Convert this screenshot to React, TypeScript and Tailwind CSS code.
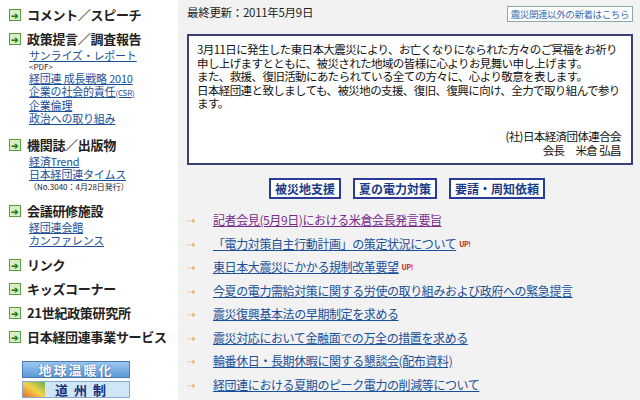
const F = { fontFamily: '"Noto Sans CJK JP", "Liberation Sans", sans-serif' };

function Head({ t }: { t: string }) {
  return (
    <div className="flex items-center gap-[6px] font-bold text-[13px] text-[#222] leading-[16px] tracking-[-0.3px]">
      <span className="w-[12px] h-[12px] bg-[#d8f0c8] border border-[#5a9a3a] flex items-center justify-center text-[#2a7a1a] text-[9px] leading-none">➔</span>
      {t}
    </div>
  );
}

function L({ children }: { children: React.ReactNode }) {
  return <div className="text-[11px] leading-[13px] text-[#1a4f9a] underline tracking-[-0.2px]">{children}</div>;
}

const news = [
  ["記者会見(5月9日)における米倉会長発言要旨", false, true],
  ["「電力対策自主行動計画」の策定状況について", true, false],
  ["東日本大震災にかかる規制改革要望", true, false],
  ["今夏の電力需給対策に関する労使の取り組みおよび政府への緊急提言", false, false],
  ["震災復興基本法の早期制定を求める", false, false],
  ["震災対応において金融面での万全の措置を求める", false, false],
  ["輪番休日・長期休暇に関する懇談会(配布資料)", false, false],
  ["経団連における夏期のピーク電力の削減等について", false, false],
  ["本年夏の電力需給対策に関する懇談会(配布資料)", false, false],
] as const;

export default function App() {
  return (
    <div className="w-[640px] h-[400px] overflow-hidden flex bg-white" style={F}>
      <aside className="w-[178px] shrink-0 pl-[9px] pt-[7px] flex flex-col">
        <Head t="コメント／スピーチ" />
        <div className="mt-[8px]"><Head t="政策提言／調査報告" /></div>
        <div className="pl-[20px] mt-[2px]">
          <L>サンライズ・レポート</L>
          <div className="text-[8px] leading-[10px] text-[#222]">&lt;PDF&gt;</div>
          <L>経団連 成長戦略 2010</L>
          <L>企業の社会的責任<span className="text-[8px]">(CSR)</span></L>
          <L>企業倫理</L>
          <L>政治への取り組み</L>
        </div>
        <div className="mt-[12px]"><Head t="機関誌／出版物" /></div>
        <div className="pl-[20px] mt-[2px]">
          <L>経済Trend</L>
          <L>日本経団連タイムス</L>
          <div className="text-[8px] leading-[12px] text-[#222]">（No.3040：4月28日発行）</div>
        </div>
        <div className="mt-[10px]"><Head t="会議研修施設" /></div>
        <div className="pl-[20px] mt-[2px]">
          <L>経団連会館</L>
          <L>カンファレンス</L>
        </div>
        <div className="mt-[10px] flex flex-col gap-[8px]">
          <Head t="リンク" />
          <Head t="キッズコーナー" />
          <Head t="21世紀政策研究所" />
          <Head t="日本経団連事業サービス" />
        </div>
        <div className="ml-[13px] mt-[16px] flex flex-col gap-[3px]">
          <div className="w-[108px] h-[17px] bg-gradient-to-b from-[#9cc8f0] to-[#5d9ad8] border border-[#4a7ab0] text-white font-bold text-[13px] leading-[15px] text-center tracking-[2px]" style={{ textShadow: "0 0 2px #1a4f9a" }}>地球温暖化</div>
          <div className="w-[108px] h-[17px] bg-[#cfe6f7] border border-[#88aad0] text-[#1a2f7a] font-bold text-[13px] leading-[15px] flex items-center gap-[10px]">
            <span className="w-[22px] h-full bg-gradient-to-tr from-[#e06a2a] via-[#f2d34a] to-[#6ab04a]" />
            <span className="tracking-[6px]">道州制</span>
          </div>
        </div>
      </aside>
      <main className="flex-1 bg-[#f2f2f2] pl-[9px] pr-[7px] pt-[4px]">
        <div className="flex justify-between items-center">
          <span className="text-[11.5px] text-[#222] tracking-[-0.3px]">最終更新：2011年5月9日</span>
          <span className="text-[9.5px] text-[#3a6ab0] bg-white border border-[#8aa] px-[3px] leading-[14px] mt-[2px] tracking-[-0.4px]">震災関連以外の新着はこちら</span>
        </div>
        <div className="mt-[12px] bg-white border-2 border-[#3a3f7a] h-[131px] pl-[8px] pr-[6px] pt-[7px] text-[11.5px] leading-[13.5px] text-[#111] tracking-[-0.6px]">
          <p>3月11日に発生した東日本大震災により、お亡くなりになられた方々のご冥福をお祈り申し上げますとともに、被災された地域の皆様に心よりお見舞い申し上げます。<br />また、救援、復旧活動にあたられている全ての方々に、心より敬意を表します。<br />日本経団連と致しましても、被災地の支援、復旧、復興に向け、全力で取り組んで参ります。</p>
          <div className="text-right mt-[18px] leading-[14px] pr-[4px]">(社)日本経済団体連合会<br />会長　米倉 弘昌</div>
        </div>
        <div className="flex justify-center gap-[12px] mt-[13px] ml-[-6px]">
          {["被災地支援", "夏の電力対策", "要請・周知依頼"].map((t) => (
            <span key={t} className="border-2 border-[#2a3a9a] bg-white px-[4px] text-[12px] font-bold text-[#1a3a8a] leading-[17px]">{t}</span>
          ))}
        </div>
        <ul className="mt-[13px] flex flex-col gap-[7.5px]">
          {news.map(([t, up, visited]) => (
            <li key={t} className="flex items-center text-[12px] leading-[16px] tracking-[-0.4px]">
              <span className="w-[26px] text-[#e8a030] text-[10px]">⇢</span>
              <span className={`underline ${visited ? "text-[#7a2a8a]" : "text-[#1a4f9a]"}`}>{t}</span>
              {up && <span className="text-[#d01010] font-bold text-[7px] ml-[3px] self-start">UP!</span>}
            </li>
          ))}
        </ul>
      </main>
    </div>
  );
}
